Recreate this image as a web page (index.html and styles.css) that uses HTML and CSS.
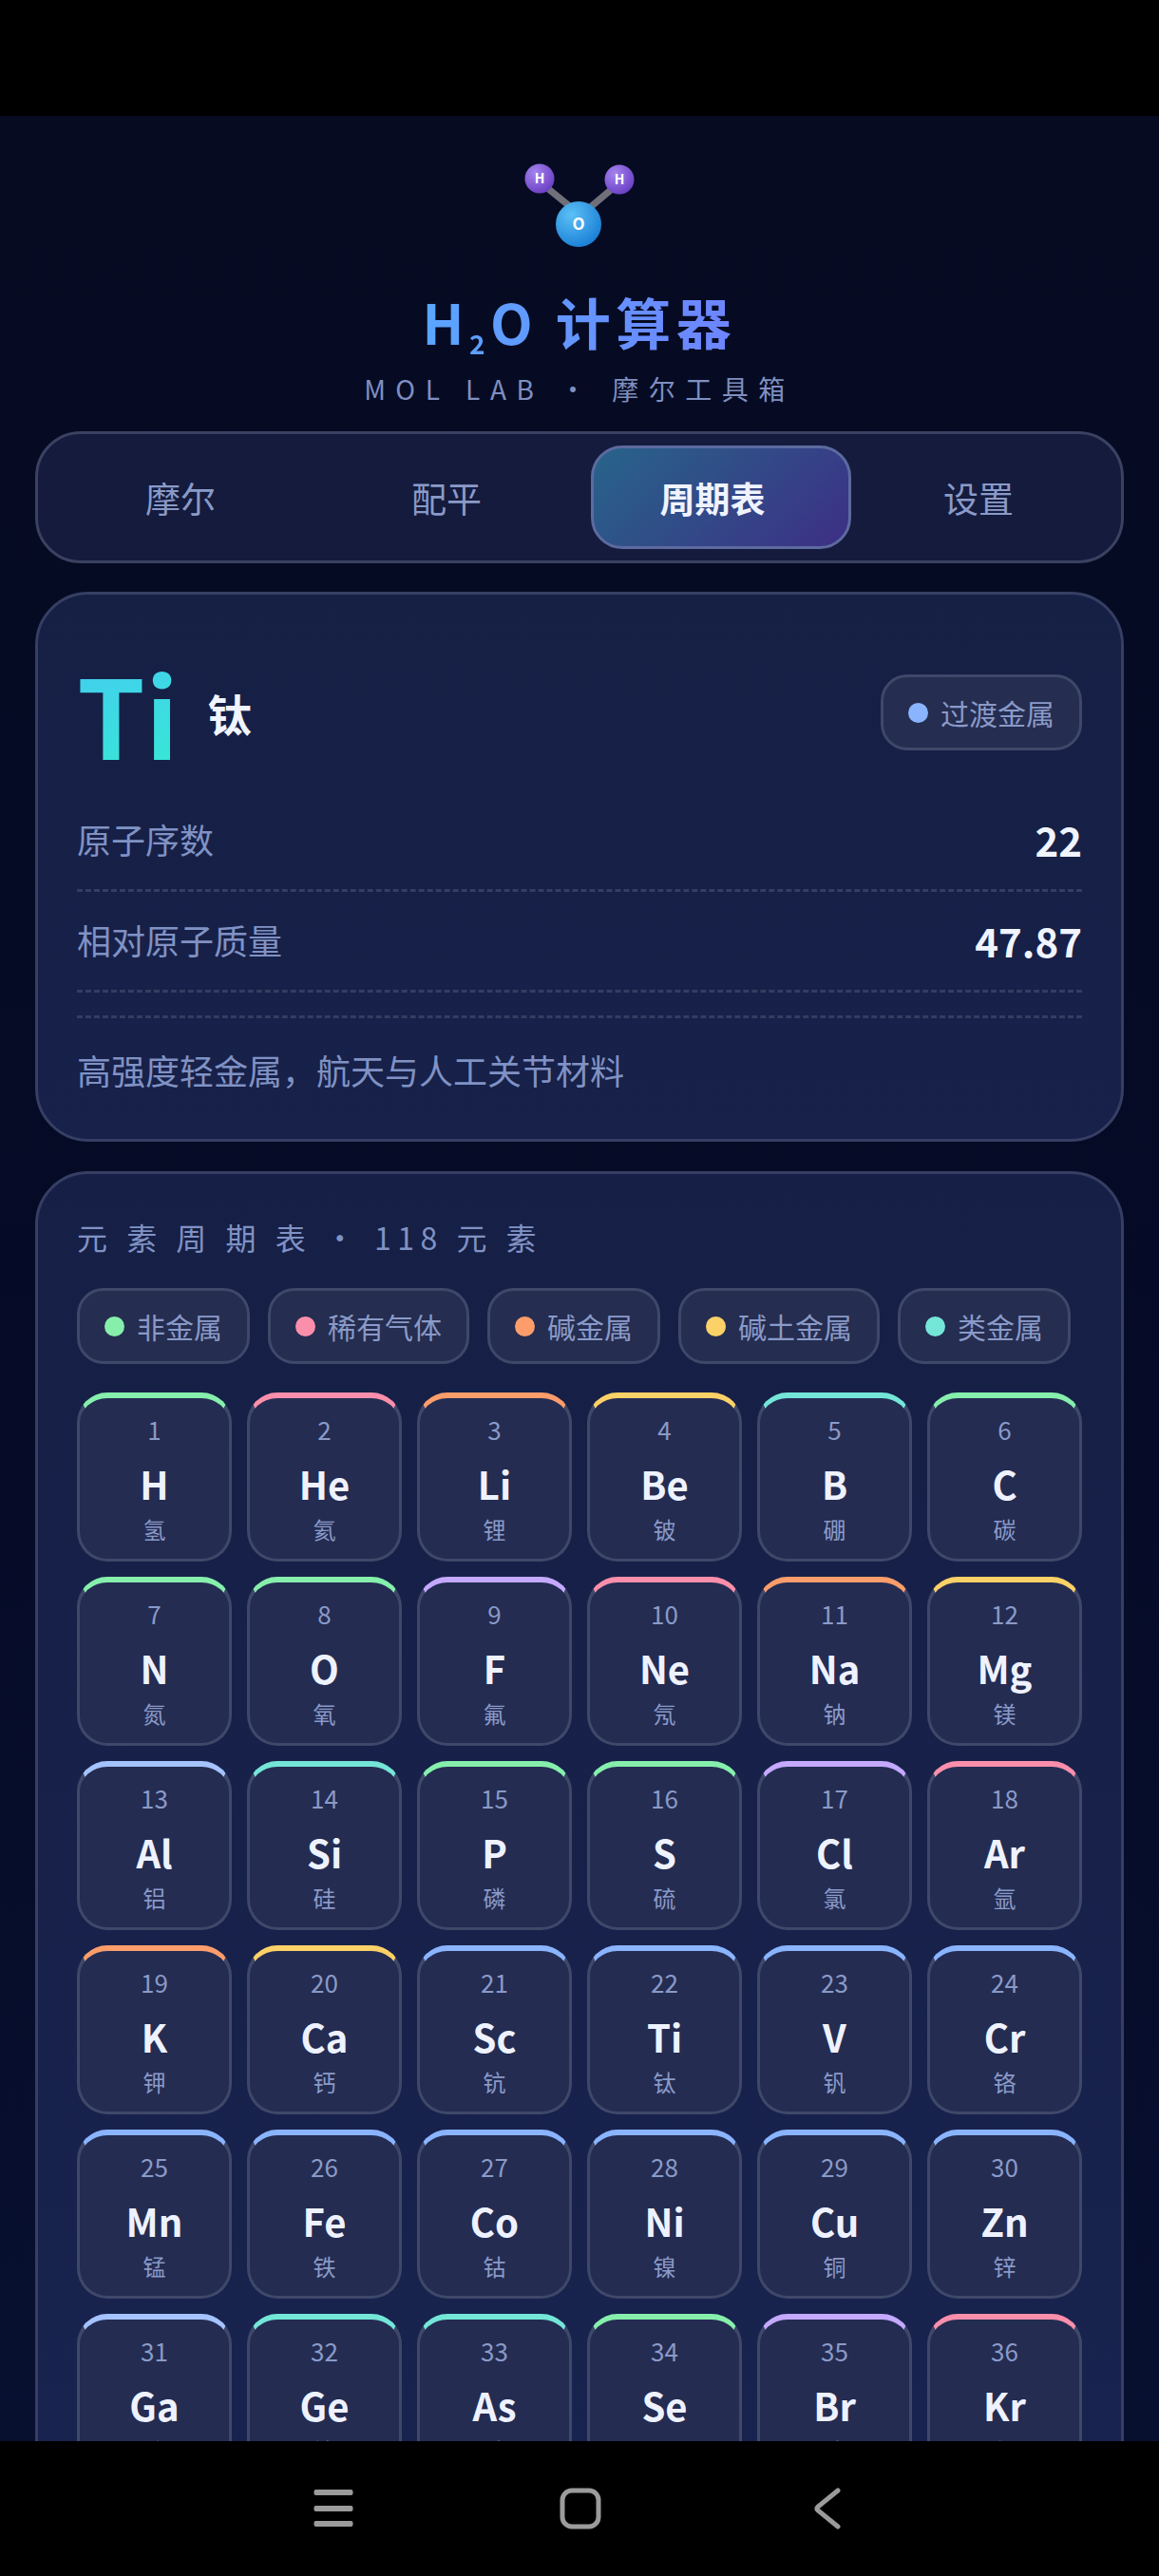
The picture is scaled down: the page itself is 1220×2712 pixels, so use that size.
FILE: index.html
```html
<!DOCTYPE html>
<html>
<head>
<meta charset="utf-8">
<meta name="viewport" content="width=device-width, initial-scale=1">
<link rel="stylesheet" href="styles.css">
</head>
<body>

<div class="statusbar"></div>

<div class="screen">
  <div class="brand">
    <svg class="molecule" width="120" height="104" viewBox="0 0 120 104">
      <defs>
        <radialGradient id="hydrogen" cx="35%" cy="30%" r="75%">
          <stop offset="0" stop-color="#a483ee"/>
          <stop offset="1" stop-color="#6a3fc4"/>
        </radialGradient>
        <radialGradient id="oxygen" cx="35%" cy="30%" r="75%">
          <stop offset="0" stop-color="#5cc0f5"/>
          <stop offset="1" stop-color="#1a7fd6"/>
        </radialGradient>
      </defs>
      <line x1="20" y1="27" x2="52" y2="53" stroke="#6f7079" stroke-width="7"/>
      <line x1="100" y1="28" x2="68" y2="55" stroke="#6f7079" stroke-width="7"/>
      <circle cx="18" cy="22" r="15.5" fill="url(#hydrogen)"/>
      <circle cx="102" cy="23" r="15.5" fill="url(#hydrogen)"/>
      <circle cx="59" cy="70" r="24" fill="url(#oxygen)"/>
      <text x="18" y="27" class="atom atom-h">H</text>
      <text x="102" y="28" class="atom atom-h">H</text>
      <text x="59" y="76" class="atom atom-o">O</text>
    </svg>
    <h1 class="title"><span>H<sub>2</sub>O 计算器</span></h1>
    <div class="subtitle">MOL LAB · 摩尔工具箱</div>
  </div>

  <div class="tabs">
    <div class="tab-pill"></div>
    <div class="tab">摩尔</div>
    <div class="tab">配平</div>
    <div class="tab active">周期表</div>
    <div class="tab">设置</div>
  </div>

  <div class="card detail">
    <div class="detail-head">
      <div class="detail-name">
        <span class="big-symbol">Ti</span>
        <span class="big-name">钛</span>
      </div>
      <div class="chip"><i class="dot transition"></i>过渡金属</div>
    </div>
    <div class="row"><span>原子序数</span><b>22</b></div>
    <div class="row"><span>相对原子质量</span><b>47.87</b></div>
    <div class="note">高强度轻金属，航天与人工关节材料</div>
  </div>

  <div class="card table-card">
    <div class="table-title">元 素 周 期 表 · 118 元 素</div>
    <div class="legend">
      <div class="chip"><i class="dot nonmetal"></i>非金属</div>
      <div class="chip"><i class="dot noble"></i>稀有气体</div>
      <div class="chip"><i class="dot alkali"></i>碱金属</div>
      <div class="chip"><i class="dot earth"></i>碱土金属</div>
      <div class="chip"><i class="dot metalloid"></i>类金属</div>
    </div>
    <div class="grid">
      <div class="tile nonmetal"><small>1</small><b>H</b><em>氢</em></div>
      <div class="tile noble"><small>2</small><b>He</b><em>氦</em></div>
      <div class="tile alkali"><small>3</small><b>Li</b><em>锂</em></div>
      <div class="tile earth"><small>4</small><b>Be</b><em>铍</em></div>
      <div class="tile metalloid"><small>5</small><b>B</b><em>硼</em></div>
      <div class="tile nonmetal"><small>6</small><b>C</b><em>碳</em></div>

      <div class="tile nonmetal"><small>7</small><b>N</b><em>氮</em></div>
      <div class="tile nonmetal"><small>8</small><b>O</b><em>氧</em></div>
      <div class="tile halogen"><small>9</small><b>F</b><em>氟</em></div>
      <div class="tile noble"><small>10</small><b>Ne</b><em>氖</em></div>
      <div class="tile alkali"><small>11</small><b>Na</b><em>钠</em></div>
      <div class="tile earth"><small>12</small><b>Mg</b><em>镁</em></div>

      <div class="tile post"><small>13</small><b>Al</b><em>铝</em></div>
      <div class="tile metalloid"><small>14</small><b>Si</b><em>硅</em></div>
      <div class="tile nonmetal"><small>15</small><b>P</b><em>磷</em></div>
      <div class="tile nonmetal"><small>16</small><b>S</b><em>硫</em></div>
      <div class="tile halogen"><small>17</small><b>Cl</b><em>氯</em></div>
      <div class="tile noble"><small>18</small><b>Ar</b><em>氩</em></div>

      <div class="tile alkali"><small>19</small><b>K</b><em>钾</em></div>
      <div class="tile earth"><small>20</small><b>Ca</b><em>钙</em></div>
      <div class="tile transition"><small>21</small><b>Sc</b><em>钪</em></div>
      <div class="tile transition"><small>22</small><b>Ti</b><em>钛</em></div>
      <div class="tile transition"><small>23</small><b>V</b><em>钒</em></div>
      <div class="tile transition"><small>24</small><b>Cr</b><em>铬</em></div>

      <div class="tile transition"><small>25</small><b>Mn</b><em>锰</em></div>
      <div class="tile transition"><small>26</small><b>Fe</b><em>铁</em></div>
      <div class="tile transition"><small>27</small><b>Co</b><em>钴</em></div>
      <div class="tile transition"><small>28</small><b>Ni</b><em>镍</em></div>
      <div class="tile transition"><small>29</small><b>Cu</b><em>铜</em></div>
      <div class="tile transition"><small>30</small><b>Zn</b><em>锌</em></div>

      <div class="tile post"><small>31</small><b>Ga</b><em>镓</em></div>
      <div class="tile metalloid"><small>32</small><b>Ge</b><em>锗</em></div>
      <div class="tile metalloid"><small>33</small><b>As</b><em>砷</em></div>
      <div class="tile nonmetal"><small>34</small><b>Se</b><em>硒</em></div>
      <div class="tile halogen"><small>35</small><b>Br</b><em>溴</em></div>
      <div class="tile noble"><small>36</small><b>Kr</b><em>氪</em></div>
    </div>
  </div>
</div>

<div class="navbar">
  <svg width="42" height="44" viewBox="0 0 42 44">
    <rect x="0.5" y="2" width="41" height="6" rx="2" fill="#9b9b9b"/>
    <rect x="0.5" y="19" width="41" height="6" rx="2" fill="#9b9b9b"/>
    <rect x="0.5" y="35" width="41" height="6" rx="2" fill="#9b9b9b"/>
  </svg>
  <svg width="44" height="44" viewBox="0 0 44 44">
    <rect x="3" y="3" width="38" height="38" rx="10" fill="none" stroke="#9b9b9b" stroke-width="5"/>
  </svg>
  <svg width="35" height="44" viewBox="0 0 35 44">
    <path d="M32 3 L11 20 Q9 22 11 24 L32 41" fill="none" stroke="#9b9b9b" stroke-width="5" stroke-linecap="round"/>
  </svg>
</div>

</body>
</html>
```
FILE: styles.css
```css
html, body {
    margin: 0;
    height: 2712px;
    overflow: hidden;
    background: #000;
    font-family: "Noto Sans CJK SC", "Noto Sans", sans-serif;
}

.statusbar {
    height: 122px;
    background: #000;
}

.screen {
    height: 2448px;
    padding: 0 37px;
    box-sizing: border-box;
    overflow: hidden;
    background: linear-gradient(180deg, #060b22 0%, #050b26 50%, #081030 100%);
}

/* brand block */
.brand {
    height: 332px;
    display: flex;
    flex-direction: column;
    align-items: center;
}

.molecule {
    margin-top: 44px;
    flex: none;
}

.atom {
    fill: #fff;
    font-weight: 700;
    text-anchor: middle;
}

.atom-h { font-size: 14px; }
.atom-o { font-size: 17px; }

.title {
    margin: 30px 0 0 0;
    font-size: 58px;
    font-weight: 700;
    line-height: 76px;
    letter-spacing: 5.5px;
}

.title span {
    background: linear-gradient(90deg, #5aa5ff, #6e84ff);
    -webkit-background-clip: text;
    background-clip: text;
    color: transparent;
}

.title sub {
    font-size: 28px;
    line-height: 0;
    vertical-align: -10px;
}

.subtitle {
    margin-top: 13px;
    font-size: 28px;
    line-height: 40px;
    letter-spacing: 10.5px;
    color: #7f8fc0;
}

/* tabs */
.tabs {
    position: relative;
    display: grid;
    grid-template-columns: repeat(4, 1fr);
    height: 139px;
    box-sizing: border-box;
    padding: 12px 10px;
    background: #141b3d;
    border: 3px solid #3a4161;
    border-radius: 48px;
}

.tab {
    position: relative;
    display: flex;
    align-items: center;
    justify-content: center;
    font-size: 37px;
    color: #8a9ac8;
}

.tab.active {
    color: #eff3ff;
    font-weight: 700;
}

.tab-pill {
    position: absolute;
    left: 582px;
    top: 12px;
    width: 274px;
    height: 109px;
    box-sizing: border-box;
    border: 3px solid #5d6a9f;
    border-radius: 33px;
    background: linear-gradient(135deg, #27648a, #3d2f85);
}

/* cards */
.card {
    background: linear-gradient(180deg, #161f44, #17214a);
    border: 3px solid #363f63;
    border-radius: 56px;
    padding: 41px;
}

.detail {
    margin-top: 30px;
    height: 579px;
    box-sizing: border-box;
}

.detail-head {
    display: flex;
    justify-content: space-between;
    align-items: center;
}

.detail-name {
    display: flex;
    align-items: center;
    gap: 31px;
}

.big-symbol {
    font-size: 115px;
    font-weight: 700;
    background: linear-gradient(160deg, #45c8f5, #35ecd0);
    -webkit-background-clip: text;
    background-clip: text;
    color: transparent;
}

.big-name {
    font-size: 46px;
    font-weight: 700;
    color: #f0f4ff;
}

.chip {
    display: flex;
    align-items: center;
    gap: 13px;
    padding: 15px 26px;
    font-size: 30px;
    line-height: 44px;
    color: #8a9ac8;
    background: #252d50;
    border: 3px solid #3f4869;
    border-radius: 28px;
}

.dot {
    width: 21px;
    height: 21px;
    border-radius: 50%;
}

.row {
    display: flex;
    justify-content: space-between;
    align-items: center;
    height: 106px;
    box-sizing: border-box;
    padding-bottom: 3px;
    border-bottom: 3px dashed #343d62;
    font-size: 36px;
    color: #8092c4;
}

.row b {
    font-size: 42px;
    font-weight: 700;
    color: #f0f4ff;
}

.note {
    margin-top: 24px;
    padding-top: 29px;
    border-top: 3px dashed #343d62;
    font-size: 36px;
    line-height: 50px;
    color: #8092c4;
}

.table-card {
    margin-top: 31px;
    padding-top: 43px;
    background: linear-gradient(180deg, #161f45, #18234f);
}

.table-title {
    font-size: 32px;
    line-height: 46px;
    letter-spacing: 6.5px;
    color: #8092c4;
}

.legend {
    display: flex;
    gap: 19px;
    margin-top: 31px;
}

.grid {
    display: grid;
    grid-template-columns: repeat(6, 1fr);
    gap: 16px;
    margin-top: 30px;
}

.tile {
    display: flex;
    flex-direction: column;
    align-items: center;
    height: 178px;
    box-sizing: border-box;
    padding-top: 14px;
    background: #242c52;
    border: 3px solid #3f4869;
    border-top-width: 6px;
    border-radius: 32px;
}

.tile small {
    font-size: 26px;
    line-height: 38px;
    color: #8a9ac8;
}

.tile b {
    margin-top: 9px;
    font-size: 40px;
    line-height: 58px;
    color: #eef2ff;
}

.tile em {
    margin-top: 1px;
    font-size: 24px;
    line-height: 35px;
    font-style: normal;
    color: #8a9ac8;
}

/* category colours */
.tile.nonmetal { border-top-color: #86efac; }
.tile.noble { border-top-color: #fb8fab; }
.tile.alkali { border-top-color: #fd9d6b; }
.tile.earth { border-top-color: #fcd167; }
.tile.metalloid { border-top-color: #74e6d8; }
.tile.halogen { border-top-color: #c4a9ff; }
.tile.transition { border-top-color: #8ab4ff; }
.tile.post { border-top-color: #a5c3ff; }

.dot.nonmetal { background: #86efac; }
.dot.noble { background: #fb8fab; }
.dot.alkali { background: #fd9d6b; }
.dot.earth { background: #fcd167; }
.dot.metalloid { background: #74e6d8; }
.dot.transition { background: #8ab4ff; }

/* system nav */
.navbar {
    height: 142px;
    display: flex;
    align-items: center;
    gap: 217px;
    padding-left: 330px;
    background: #000;
}
```
